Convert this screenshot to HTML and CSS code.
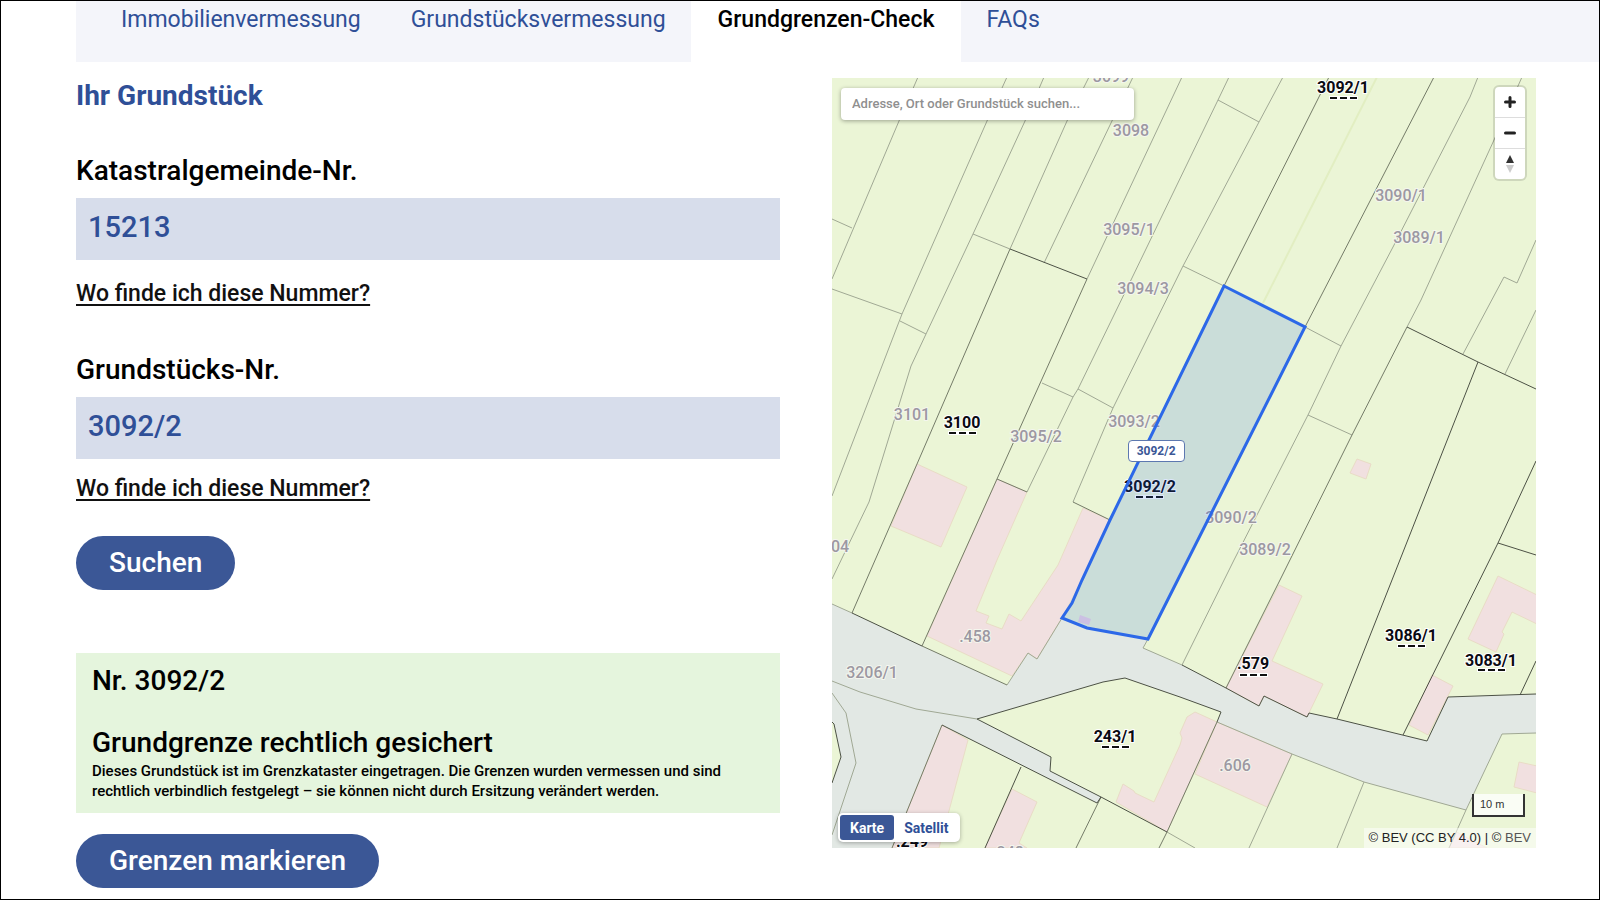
FILE: index.html
```html
<!DOCTYPE html>
<html lang="de">
<head>
<meta charset="utf-8">
<meta name="viewport" content="width=device-width, initial-scale=1">
<title>Grundgrenzen-Check</title>
<link rel="stylesheet" href="styles.css">
</head>
<body>
<div class="page">
  <nav class="tabs" aria-label="Themen">
    <a class="tab" href="#immobilien">Immobilienvermessung</a>
    <a class="tab" href="#grundstueck">Grundstücksvermessung</a>
    <a class="tab tab-active" href="#check" aria-current="page">Grundgrenzen-Check</a>
    <a class="tab" href="#faqs">FAQs</a>
  </nav>
  <main class="content">
    <section class="panel">
      <h1 class="title">Ihr Grundstück</h1>
      <form class="form">
        <div class="field">
          <label class="label" for="kg">Katastralgemeinde-Nr.</label>
          <input class="input" id="kg" type="text" value="15213">
          <a class="help help-first" href="#hilfe-kg">Wo finde ich diese Nummer?</a>
        </div>
        <div class="field">
          <label class="label" for="gst">Grundstücks-Nr.</label>
          <input class="input" id="gst" type="text" value="3092/2">
          <a class="help" href="#hilfe-gst">Wo finde ich diese Nummer?</a>
        </div>
        <button class="button" type="button">Suchen</button>
      </form>
      <div class="result">
        <p class="result-number">Nr. 3092/2</p>
        <h2 class="result-title">Grundgrenze rechtlich gesichert</h2>
        <p class="result-text">Dieses Grundstück ist im Grenzkataster eingetragen. Die Grenzen wurden vermessen und sind rechtlich verbindlich festgelegt – sie können nicht durch Ersitzung verändert werden.</p>
      </div>
      <button class="button" type="button">Grenzen markieren</button>
    </section>

    <section class="map" aria-label="Karte">
      <svg class="map-canvas" viewBox="832 78 704 770" preserveAspectRatio="xMidYMid slice" aria-hidden="true">
        <rect class="land" x="832" y="78" width="704" height="770"/>
        <path class="road" d="M832 604L852 613 922 646 1007 685 1028 653 1037 659 1062 618 1087 628 1148 639 1143 648 1182 665 1226 688 1259 706 1264 696 1307 717 1309 713 1337 719 1427 741 1448 697 1536 694V733L1502 734 1466 810 1364 782 1292 754 1217 722 1221 712 1180 697 1125 678 1103 682 977 719 1051 757 1050 771 1101 797 1097 803 942 725 892 848H832Z"/>
        <path class="land" d="M832 722L834 724 841 757 832 783Z"/>
        <g class="building">
          <path d="M917 464L967 487 941 547 891 526Z"/>
          <path d="M997 479L1027 492 997 560 976 611 989 616 986 623 1002 629 1009 614 1021 621 1058 565 1083 508 1110 520 1082 580 1062 618 1037 659 1028 653 1012 676 927 636Z"/>
          <path d="M1279 585L1302 596 1272 661 1323 684 1307 717 1264 696 1259 706 1226 688Z"/>
          <path d="M1498 576L1537 595V624L1512 612 1502 632 1504 634 1496 652 1468 639Z"/>
          <path d="M1432 675L1453 686 1428 735 1409 725Z"/>
          <path d="M1519 762L1537 766V793L1514 787Z"/>
          <path d="M1460 834L1487 848H1449L1457 832Z"/>
          <path d="M1357 459L1371 464 1366 479 1350 473Z"/>
          <path d="M1217 722L1292 754 1267 807 1195 774Z"/>
          <path d="M1195 712L1217 722 1167 832 1116 802 1123 784 1134 791 1135 793 1154 802 1180 745 1182 738 1180 733 1187 717Z"/>
          <path d="M942 725L968 740 939 848H892Z"/>
          <path d="M1012 789L1037 802 1019 843 1027 848H985Z"/>
        </g>
        <path class="faint" d="M1377 77L1263 303"/>
        <g class="line">
          <path d="M918 77L899 121 832 279M832 219L852 228M1007 77L987 121 902 314 832 496M832 289L902 314"/>
          <path d="M1044 77L1025 121 973 234 926 334 911 366 869 502 832 579M900 321L926 334"/>
          <path d="M1089 77L1067 121 1010 249M973 234L1010 249M1133 77L1044 263M1182 77L1087 279"/>
          <path d="M1229 77L1218 100 1131 280 1078 389 1073 397 1027 492M1042 383L1073 397M1078 389L1113 408"/>
          <path d="M1283 77L1259 122 1183 266 1113 408 1073 502M1218 100L1259 122M1183 266L1224 286"/>
          <path d="M1478 77L1470 97 1393 247 1341 346 1308 415 1234 560 1182 665M1305 327L1341 346M1308 415L1352 435"/>
          <path d="M1522 77L1494 140 1421 300 1407 327M1536 240L1517 283 1504 277 1463 354M1536 310L1505 374"/>
          <path d="M832 693L846 713 856 763 832 835M832 681L860 692 916 709 977 719"/>
          <path d="M832 604L852 613M1007 685L1028 653 1037 659 1062 618M1143 648L1182 665M1143 648L1148 639"/>
          <path d="M1292 754L1249 848M1364 782L1337 848M1466 810L1449 848M1536 733L1502 734 1466 810 1364 782 1292 754 1217 722M1167 832L1195 848"/>
        </g>
        <g class="line-mid">
          <path d="M1010 249L917 464 852 613M1087 279L997 479 922 646M1329 77L1224 286M1434 77L1305 327M1407 327L1352 435 1280 580 1226 688"/>
          <path d="M997 479L1027 492M1073 502L1110 520M922 646L1007 685M1217 722L1167 832 1159 848M1101 797L1076 848M942 725L892 848"/>
        </g>
        <g class="line-dark">
          <path d="M1010 249L1087 279M852 613L922 646M1407 327L1478 362 1536 389M1478 362L1392 580 1337 719M1536 461L1498 543 1403 735M1498 543L1536 555"/>
          <path d="M1182 665L1226 688 1259 706 1264 696 1307 717 1309 713 1337 719 1427 741 1448 697 1536 694M1520 695L1536 661"/>
          <path d="M1217 722L1221 712 1180 697 1125 678 1103 682 977 719 1051 757 1050 771 1101 797 1167 832M1101 797L1097 803 942 725M1021 767L985 848M832 722L834 724 841 757 832 783"/>
        </g>
        <g class="num">
          <text x="1111" y="82">3099</text>
          <text x="1131" y="136">3098</text>
          <text x="1129" y="235">3095/1</text>
          <text x="1143" y="294">3094/3</text>
          <text x="1401" y="201">3090/1</text>
          <text x="1419" y="243">3089/1</text>
          <text x="912" y="420">3101</text>
          <text x="1036" y="442">3095/2</text>
          <text x="1134" y="427">3093/2</text>
          <text x="831" y="552">3104</text>
          <text x="1231" y="523">3090/2</text>
          <text x="1265" y="555">3089/2</text>
          <text x="975" y="642">.458</text>
          <text x="872" y="678">3206/1</text>
          <text x="1235" y="771">.606</text>
          <text x="1008" y="858">.248</text>
        </g>
        <g class="num num-strong">
          <text x="1343" y="93">3092/1</text>
          <text x="962" y="428">3100</text>
          <text x="1150" y="492">3092/2</text>
          <text x="1115" y="742">243/1</text>
          <text x="1253" y="669">.579</text>
          <text x="1411" y="641">3086/1</text>
          <text x="1491" y="666">3083/1</text>
          <text x="912" y="847">.249</text>
        </g>
        <path class="dash-halo" d="M1329 98h29M948 433h29M1135 497h29M1101 747h29M1239 675h29M1397 646h29M1477 670h29"/>
        <path class="dash" d="M1330 98h27M949 433h27M1136 497h27M1102 747h27M1240 675h27M1398 646h27M1478 670h27"/>
        <path class="shed" d="M1080 615L1091 619 1089 625 1078 622Z"/>
        <path class="selected" d="M1224 286L1305 327 1148 639 1087 628 1062 618 1072 603 1082 580 1110 520Z"/>
      </svg>

      <input class="map-search" type="text" aria-label="Adresse, Ort oder Grundstück suchen" placeholder="Adresse, Ort oder Grundstück suchen...">

      <div class="map-nav">
        <button class="nav-button" type="button" aria-label="Vergrößern"><svg class="nav-icon" viewBox="0 0 30 30"><path class="stroke" d="M15 10.500v9M10.500 15h9"/></svg></button>
        <button class="nav-button" type="button" aria-label="Verkleinern"><svg class="nav-icon" viewBox="0 0 30 30"><path class="stroke" d="M10.500 15h9"/></svg></button>
        <button class="nav-button" type="button" aria-label="Nach Norden ausrichten"><svg class="nav-icon" viewBox="0 0 30 30"><path fill="#333" d="M11 14L15 6 19 14Z"/><path fill="#ccc" d="M11 16H19L15 24Z"/></svg></button>
      </div>

      <span class="map-tag">3092/2</span>

      <div class="map-switch">
        <button class="switch-button switch-active" type="button" aria-pressed="true">Karte</button>
        <button class="switch-button" type="button" aria-pressed="false">Satellit</button>
      </div>

      <div class="map-scale">10 m</div>
      <div class="map-credit">© BEV (CC BY 4.0) | © <a class="credit-link" href="#bev">BEV</a></div>
    </section>
  </main>
</div>
</body>
</html>
```

FILE: styles.css
```css
* {
  box-sizing: border-box;
}

body {
  margin: 0;
  background: #fff;
  color: #000;
  font-family: Roboto, "Liberation Sans", sans-serif;
}

button,
input {
  font-family: inherit;
}

.page {
  min-height: 100vh;
  border: 1px solid #000;
}

.tabs {
  display: flex;
  margin-left: 75px;
  padding-left: 20px;
  background: #f4f5fa;
}

.tab {
  padding: 3px 25px 26px;
  font-size: 23px;
  line-height: 32px;
  color: #2f4f97;
  text-decoration: none;
}

.tab-active {
  padding-right: 27px;
  padding-left: 27px;
  background: #fff;
  color: #000;
  font-weight: 500;
}

.content {
  display: grid;
  grid-template-columns: 1fr 1fr;
  gap: 52px;
  align-items: start;
  padding: 16px 63px 11px 75px;
}

.title {
  margin: 0 0 39px;
  font-size: 28px;
  line-height: 36px;
  font-weight: 700;
  color: #2f4f97;
}

.field {
  display: flex;
  flex-direction: column;
  align-items: flex-start;
  margin-bottom: 31px;
}

.label {
  margin-bottom: 9px;
  font-size: 28px;
  line-height: 36px;
  font-weight: 500;
}

.input {
  width: 100%;
  height: 62px;
  padding: 0 12px 4px;
  border: 0;
  border-radius: 0;
  background: #d7ddeb;
  color: #2f4f97;
  font-size: 29px;
  font-weight: 500;
}

.help {
  margin-top: 14px;
  font-size: 23px;
  line-height: 32px;
  font-weight: 500;
  color: #111;
  text-decoration: underline;
  text-decoration-thickness: 2px;
  text-underline-offset: 3px;
}

.help-first {
  margin: 18px 0 11px;
}

.form .field + .field {
  margin-bottom: 31px;
}

.button {
  display: block;
  height: 54px;
  padding: 0 33px 2px;
  border: 0;
  border-radius: 27px;
  background: #3b5796;
  color: #fff;
  font-size: 28px;
  font-weight: 500;
}

.result {
  margin: 63px 0 21px;
  padding: 10px 16px 12px;
  background: #e5f5dd;
}

.result-number,
.result-title {
  margin: 0;
  font-size: 28px;
  line-height: 36px;
  font-weight: 500;
}

.result-number {
  margin-bottom: 26px;
}

.result-text {
  max-width: 640px;
  margin: 0;
  font-size: 15px;
  line-height: 20px;
  font-weight: 500;
}

.map {
  position: relative;
  aspect-ratio: 704 / 770;
  overflow: hidden;
}

.map-canvas {
  display: block;
  width: 100%;
  height: 100%;
}

.land {
  fill: #ebf5d6;
}

.road {
  fill: #e2e8e4;
}

.building {
  fill: #f1e0e0;
  stroke: #e9dcc6;
}

.faint,
.line,
.line-mid,
.line-dark {
  fill: none;
  stroke-width: 1px;
}

.faint {
  stroke: #e2eec2;
  stroke-width: 2px;
}

.line {
  stroke: #a0a894;
}

.line-mid {
  stroke: #747b68;
}

.line-dark {
  stroke: #4c5145;
}

.num {
  fill: #9c98a2;
  stroke: #f4f6ee;
  stroke-width: 2px;
  paint-order: stroke;
  font-size: 16px;
  font-weight: 500;
  text-anchor: middle;
}

.num-strong {
  fill: #0a0a12;
  stroke: #fff;
  font-weight: 700;
}

.dash-halo {
  stroke: #fff;
  stroke-width: 4px;
}

.dash {
  stroke: #111;
  stroke-width: 2px;
  stroke-dasharray: 7 3;
}

.shed {
  fill: #ecd2e2;
}

.selected {
  fill: #2c68e8;
  fill-opacity: 0.17;
  stroke: #2c68e8;
  stroke-width: 3px;
}

.map-search {
  position: absolute;
  top: 10px;
  left: 9px;
  width: 293px;
  height: 32px;
  padding: 0 11px 2px;
  border: 0;
  border-radius: 4px;
  background: #fff;
  box-shadow: 0 1px 4px rgba(0, 0, 0, 0.35);
  font-size: 13px;
  font-weight: 500;
}

.map-search::placeholder {
  color: #8f8f8f;
  opacity: 1;
}

.map-nav {
  position: absolute;
  top: 9px;
  right: 11px;
  width: 30px;
  border-radius: 4px;
  background: #fff;
  box-shadow: 0 0 0 2px rgba(0, 0, 0, 0.12);
}

.nav-button {
  display: block;
  width: 30px;
  height: 30px;
  padding: 0;
  border: 0;
  background: none;
}

.nav-button + .nav-button {
  height: 31px;
  border-top: 1px solid #ddd;
}

.nav-icon {
  display: block;
  width: 30px;
  height: 30px;
}

.stroke {
  fill: none;
  stroke: #222;
  stroke-width: 3px;
  stroke-linecap: round;
}

.map-tag {
  position: absolute;
  top: 47%;
  left: 42%;
  padding: 0 8px;
  border: 1px solid #5d78b0;
  border-radius: 4px;
  background: #fff;
  color: #3b5796;
  font-size: 12px;
  line-height: 20px;
  font-weight: 700;
}

.map-switch {
  position: absolute;
  bottom: 6px;
  left: 6px;
  display: flex;
  padding: 2px;
  border-radius: 5px;
  background: #fff;
  box-shadow: 0 1px 4px rgba(0, 0, 0, 0.3);
}

.switch-button {
  height: 25px;
  padding: 0 10px;
  border: 0;
  border-radius: 3px;
  background: none;
  color: #2f4f97;
  font-size: 14px;
  font-weight: 700;
}

.switch-active {
  background: #3b5796;
  color: #fff;
}

.map-scale {
  position: absolute;
  right: 11px;
  bottom: 31px;
  width: 53px;
  height: 23px;
  padding-left: 6px;
  border: 2px solid #333;
  border-top: 0;
  background: rgba(255, 255, 255, 0.75);
  color: #333;
  font-family: "Liberation Sans", Arial, sans-serif;
  font-size: 11px;
  line-height: 20px;
}

.map-credit {
  position: absolute;
  right: 0;
  bottom: 0;
  padding: 0 5px;
  background: rgba(255, 255, 255, 0.5);
  color: #222;
  font-family: "Liberation Sans", Arial, sans-serif;
  font-size: 13px;
  line-height: 20px;
}

.credit-link {
  color: #555;
  text-decoration: none;
}
```
